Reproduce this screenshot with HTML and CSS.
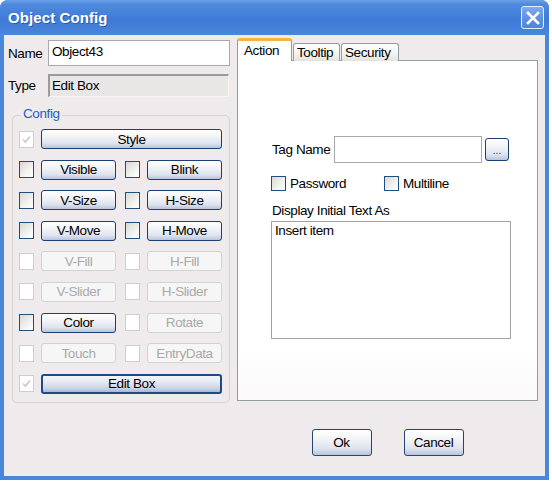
FILE: index.html
```html
<!DOCTYPE html>
<html>
<head>
<meta charset="utf-8">
<link rel="stylesheet" href="styles.css">
</head>
<body>
<div class="window">
  <div class="titlebar">
    <span class="title">Object Config</span>
    <div class="close">
      <svg width="14" height="14" viewBox="0 0 14 14"><path d="M2 2 L12 12 M12 2 L2 12" stroke="#fff" stroke-width="2.6" stroke-linecap="square"/></svg>
    </div>
  </div>
  <div class="client">
    <div class="leftcol">
      <div class="field-row">
        <span class="flabel">Name</span>
        <div class="textbox name-box">Object43</div>
      </div>
      <div class="field-row type-row">
        <span class="flabel">Type</span>
        <div class="readonly-box">Edit Box</div>
      </div>
      <div class="group">
        <span class="legend">Config</span>
        <div class="rows">
          <div class="row">
            <span class="chk disabled checked"><svg width="11" height="11" viewBox="0 0 11 11"><path d="M2 5.5 L4.5 8 L9 2.5" fill="none" stroke="#c8c8c8" stroke-width="1.6"/></svg></span>
            <span class="btn wide">Style</span>
          </div>
          <div class="row">
            <span class="chk"></span><span class="btn">Visible</span>
            <span class="chk second"></span><span class="btn">Blink</span>
          </div>
          <div class="row">
            <span class="chk"></span><span class="btn">V-Size</span>
            <span class="chk second"></span><span class="btn">H-Size</span>
          </div>
          <div class="row">
            <span class="chk"></span><span class="btn">V-Move</span>
            <span class="chk second"></span><span class="btn">H-Move</span>
          </div>
          <div class="row">
            <span class="chk disabled"></span><span class="btn disabled">V-Fill</span>
            <span class="chk disabled second"></span><span class="btn disabled">H-Fill</span>
          </div>
          <div class="row">
            <span class="chk disabled"></span><span class="btn disabled">V-Slider</span>
            <span class="chk disabled second"></span><span class="btn disabled">H-Slider</span>
          </div>
          <div class="row">
            <span class="chk"></span><span class="btn">Color</span>
            <span class="chk disabled second"></span><span class="btn disabled">Rotate</span>
          </div>
          <div class="row">
            <span class="chk disabled"></span><span class="btn disabled">Touch</span>
            <span class="chk disabled second"></span><span class="btn disabled">EntryData</span>
          </div>
          <div class="row">
            <span class="chk disabled checked"><svg width="11" height="11" viewBox="0 0 11 11"><path d="M2 5.5 L4.5 8 L9 2.5" fill="none" stroke="#c8c8c8" stroke-width="1.6"/></svg></span>
            <span class="btn wide focused">Edit Box</span>
          </div>
        </div>
      </div>
    </div>
    <div class="rightcol">
      <div class="tabs">
        <span class="tab active">Action</span>
        <span class="tab">Tooltip</span>
        <span class="tab">Security</span>
      </div>
      <div class="panel">
        <div class="tag-row">
          <span class="tag-label">Tag Name</span>
          <div class="textbox tag-box"></div>
          <span class="btn dots">...</span>
        </div>
        <div class="opt-row">
          <span class="opt"><span class="chk"></span>Password</span>
          <span class="opt"><span class="chk"></span>Multiline</span>
        </div>
        <div class="display-label">Display Initial Text As</div>
        <div class="textarea">Insert item</div>
      </div>
      <div class="actions">
        <span class="btn action">Ok</span>
        <span class="btn action">Cancel</span>
      </div>
    </div>
  </div>
</div>
</body>
</html>
```
FILE: styles.css
```css
* { box-sizing: border-box; }
body {
  margin: 0;
  background: #ffffff;
  font-family: "Liberation Sans", Arial, sans-serif;
  font-size: 13.5px;
  letter-spacing: -0.4px;
  color: #000;
}
.window {
  width: 549px;
  height: 480px;
  background: #4a86d9;
  border-radius: 8px 8px 0 0;
  padding: 0 4px 4px 4px;
  display: flex;
  flex-direction: column;
}
.titlebar {
  height: 35px;
  margin: 0 -4px;
  padding: 0 4px 0 8px;
  border-radius: 8px 8px 0 0;
  background: linear-gradient(#6b9fe8 0%, #4f8ade 12%, #3f7bd6 55%, #4783da 90%, #4a86d9 100%);
  display: flex;
  align-items: center;
  justify-content: space-between;
}
.title {
  font-family: "Liberation Sans", sans-serif;
  font-weight: bold;
  font-size: 15px;
  letter-spacing: 0.1px;
  color: #ffffff;
  text-shadow: 1px 1px 0 #2b5ab0;
}
.close {
  width: 23px;
  height: 23px;
  margin-right: 1px;
  border: 1px solid #e8f0fb;
  border-radius: 3px;
  background: linear-gradient(#7eaaf0, #5a8fe0 60%, #4f86da);
  display: flex;
  align-items: center;
  justify-content: center;
}
.client {
  flex: 1;
  background: #efebec;
  display: flex;
  padding: 2px 7px 0 4px;
  gap: 7px;
}
.leftcol {
  width: 222px;
  padding-top: 3px;
}
.field-row {
  display: flex;
  align-items: center;
}
.type-row { margin-top: 8px; }
.flabel {
  width: 40px;
  white-space: nowrap;
  overflow: hidden;
}
.textbox {
  background: #ffffff;
  border: 1px solid #a9a8ad;
  padding: 2px 3px;
}
.name-box {
  width: 182px;
  height: 26px;
  line-height: 18px;
}
.readonly-box {
  width: 181px;
  height: 23px;
  background: #e9e7e5;
  border-top: 2px solid #9c9b98;
  border-left: 2px solid #9c9b98;
  border-right: 1px solid #f6f5f3;
  border-bottom: 1px solid #f6f5f3;
  padding: 0 2px;
  line-height: 19px;
}
.group {
  position: relative;
  margin: 18px 0 0 4px;
  width: 218px;
  border: 1px solid #d6d3cc;
  border-radius: 5px;
  padding: 13px 6px 8px 6px;
}
.legend {
  position: absolute;
  top: -10px;
  left: 8px;
  padding: 0 2px;
  background: #efebec;
  color: #2a5cc4;
}
.rows {
  display: flex;
  flex-direction: column;
  gap: 10.6px;
}
.row {
  display: flex;
  align-items: center;
  height: 20px;
}
.chk {
  width: 15px;
  height: 17px;
  flex: none;
  border: 1px solid #1f4f80;
  background: linear-gradient(135deg, #d9d8d2, #f6f6f4 70%, #ffffff);
  margin-right: 7px;
  display: inline-flex;
  align-items: center;
  justify-content: center;
}
.chk.second { margin-left: 9px; }
.chk.disabled {
  border-color: #cfcdcd;
  background: #ffffff;
}
.btn {
  display: inline-flex;
  align-items: center;
  justify-content: center;
  width: 75px;
  height: 20px;
  border: 1px solid #1a3f73;
  border-radius: 3px;
  background: linear-gradient(#ffffff 0%, #f3f4f7 35%, #dde3ee 75%, #b8c4db 100%);
  white-space: nowrap;
}
.btn.wide { width: 181px; }
.btn.disabled {
  border-color: #d3d1d1;
  background: #f7f6f6;
  color: #a9a9a9;
}
.btn.focused {
  border: 2px solid #1e4a86;
  background: linear-gradient(#f4f6fb 0%, #e4e8f1 40%, #c8d1e3 80%, #a9b7d3 100%);
}
.rightcol {
  width: 301px;
  display: flex;
  flex-direction: column;
}
.tabs {
  display: flex;
  align-items: flex-end;
  height: 24px;
  gap: 1px;
  margin-bottom: -1px;
  position: relative;
  z-index: 1;
}
.tab {
  height: 18px;
  padding: 0 0 0 3px;
  border: 1px solid #929ca4;
  border-bottom: none;
  border-radius: 3px 3px 0 0;
  background: linear-gradient(#ffffff, #f3f3ef 60%, #e2e1da);
  line-height: 17px;
  white-space: nowrap;
}
.tab.active {
  height: 23px;
  width: 55px;
  padding: 0 0 0 6px;
  background: #ffffff;
  border-top: 3px solid #f5b340;
  line-height: 19px;
}
.tab:nth-child(2) { width: 47px; }
.tab:nth-child(3) { width: 58px; }
.panel {
  height: 341px;
  background: linear-gradient(#ffffff 85%, #fbf9f9);
  border: 1px solid #929ca4;
  padding: 75px 0 0 34px;
}
.tag-row {
  display: flex;
  align-items: center;
}
.tag-label { width: 62px; white-space: nowrap; }
.tag-box {
  width: 148px;
  height: 27px;
}
.btn.dots {
  width: 24px;
  height: 23px;
  margin-left: 3px;
  font-size: 10px;
  letter-spacing: 0;
  align-items: flex-end;
  padding-bottom: 4px;
  color: #333;
}
.opt-row {
  display: flex;
  margin-top: 12px;
  margin-left: -1px;
  height: 16px;
  align-items: center;
}
.opt {
  display: inline-flex;
  align-items: center;
  width: 113px;
}
.opt .chk {
  height: 15px;
  margin-right: 4px;
}
.display-label {
  margin-top: 12px;
  height: 18px;
  line-height: 16px;
}
.textarea {
  width: 240px;
  height: 118px;
  margin-left: -1px;
  border: 1px solid #a3a3a3;
  padding: 1px 3px;
  background: #ffffff;
}
.actions {
  display: flex;
  justify-content: center;
  gap: 32px;
  margin-top: 28px;
}
.btn.action {
  width: 60px;
  height: 27px;
  border-color: #24456f;
}
```
